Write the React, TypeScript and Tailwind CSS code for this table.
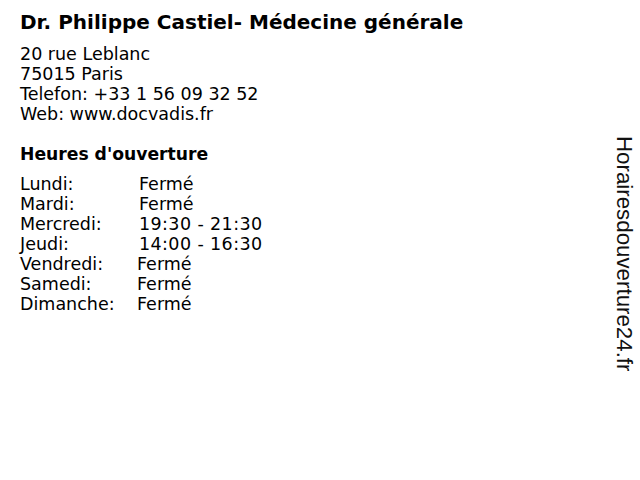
const hours: { day: string; time: string; wide: boolean }[] = [
  { day: 'Lundi:', time: 'Fermé', wide: true },
  { day: 'Mardi:', time: 'Fermé', wide: true },
  { day: 'Mercredi:', time: '19:30 - 21:30', wide: true },
  { day: 'Jeudi:', time: '14:00 - 16:30', wide: true },
  { day: 'Vendredi:', time: 'Fermé', wide: false },
  { day: 'Samedi:', time: 'Fermé', wide: false },
  { day: 'Dimanche:', time: 'Fermé', wide: false },
];

export default function App() {
  return (
    <div className="w-[640px] h-[480px] bg-white text-black flex font-['DejaVu_Sans',sans-serif] overflow-hidden">
      {/* Main info */}
      <div className="flex-1 pl-5 pt-[10px]">
        <h1 className="text-[20px] leading-[24px] font-bold">Dr. Philippe Castiel- Médecine générale</h1>

        <div className="mt-[10px] text-[17.5px] leading-[20px]">
          <div>20 rue Leblanc</div>
          <div>75015 Paris</div>
          <div>Telefon: +33 1 56 09 32 52</div>
          <div>Web: www.docvadis.fr</div>
        </div>

        <h2 className="mt-5 text-[17.2px] leading-[20px] font-bold">Heures d'ouverture</h2>

        <div className="mt-[10px] text-[17.5px] leading-[20px]">
          {hours.map((h) => (
            <div key={h.day} className="flex">
              <span className={h.wide ? 'w-[119px]' : 'w-[117px]'}>{h.day}</span>
              <span className={h.time === 'Fermé' ? '' : 'tracking-[0.4px]'}>{h.time}</span>
            </div>
          ))}
        </div>
      </div>

      {/* Side label */}
      <div className="w-[40px] pt-[136px] pl-3 flex justify-start">
        <span className="[writing-mode:vertical-rl] font-['Liberation_Sans',sans-serif] text-[22.3px] leading-[24px] text-[#111]">
          Horairesdouverture24.fr
        </span>
      </div>
    </div>
  );
}
